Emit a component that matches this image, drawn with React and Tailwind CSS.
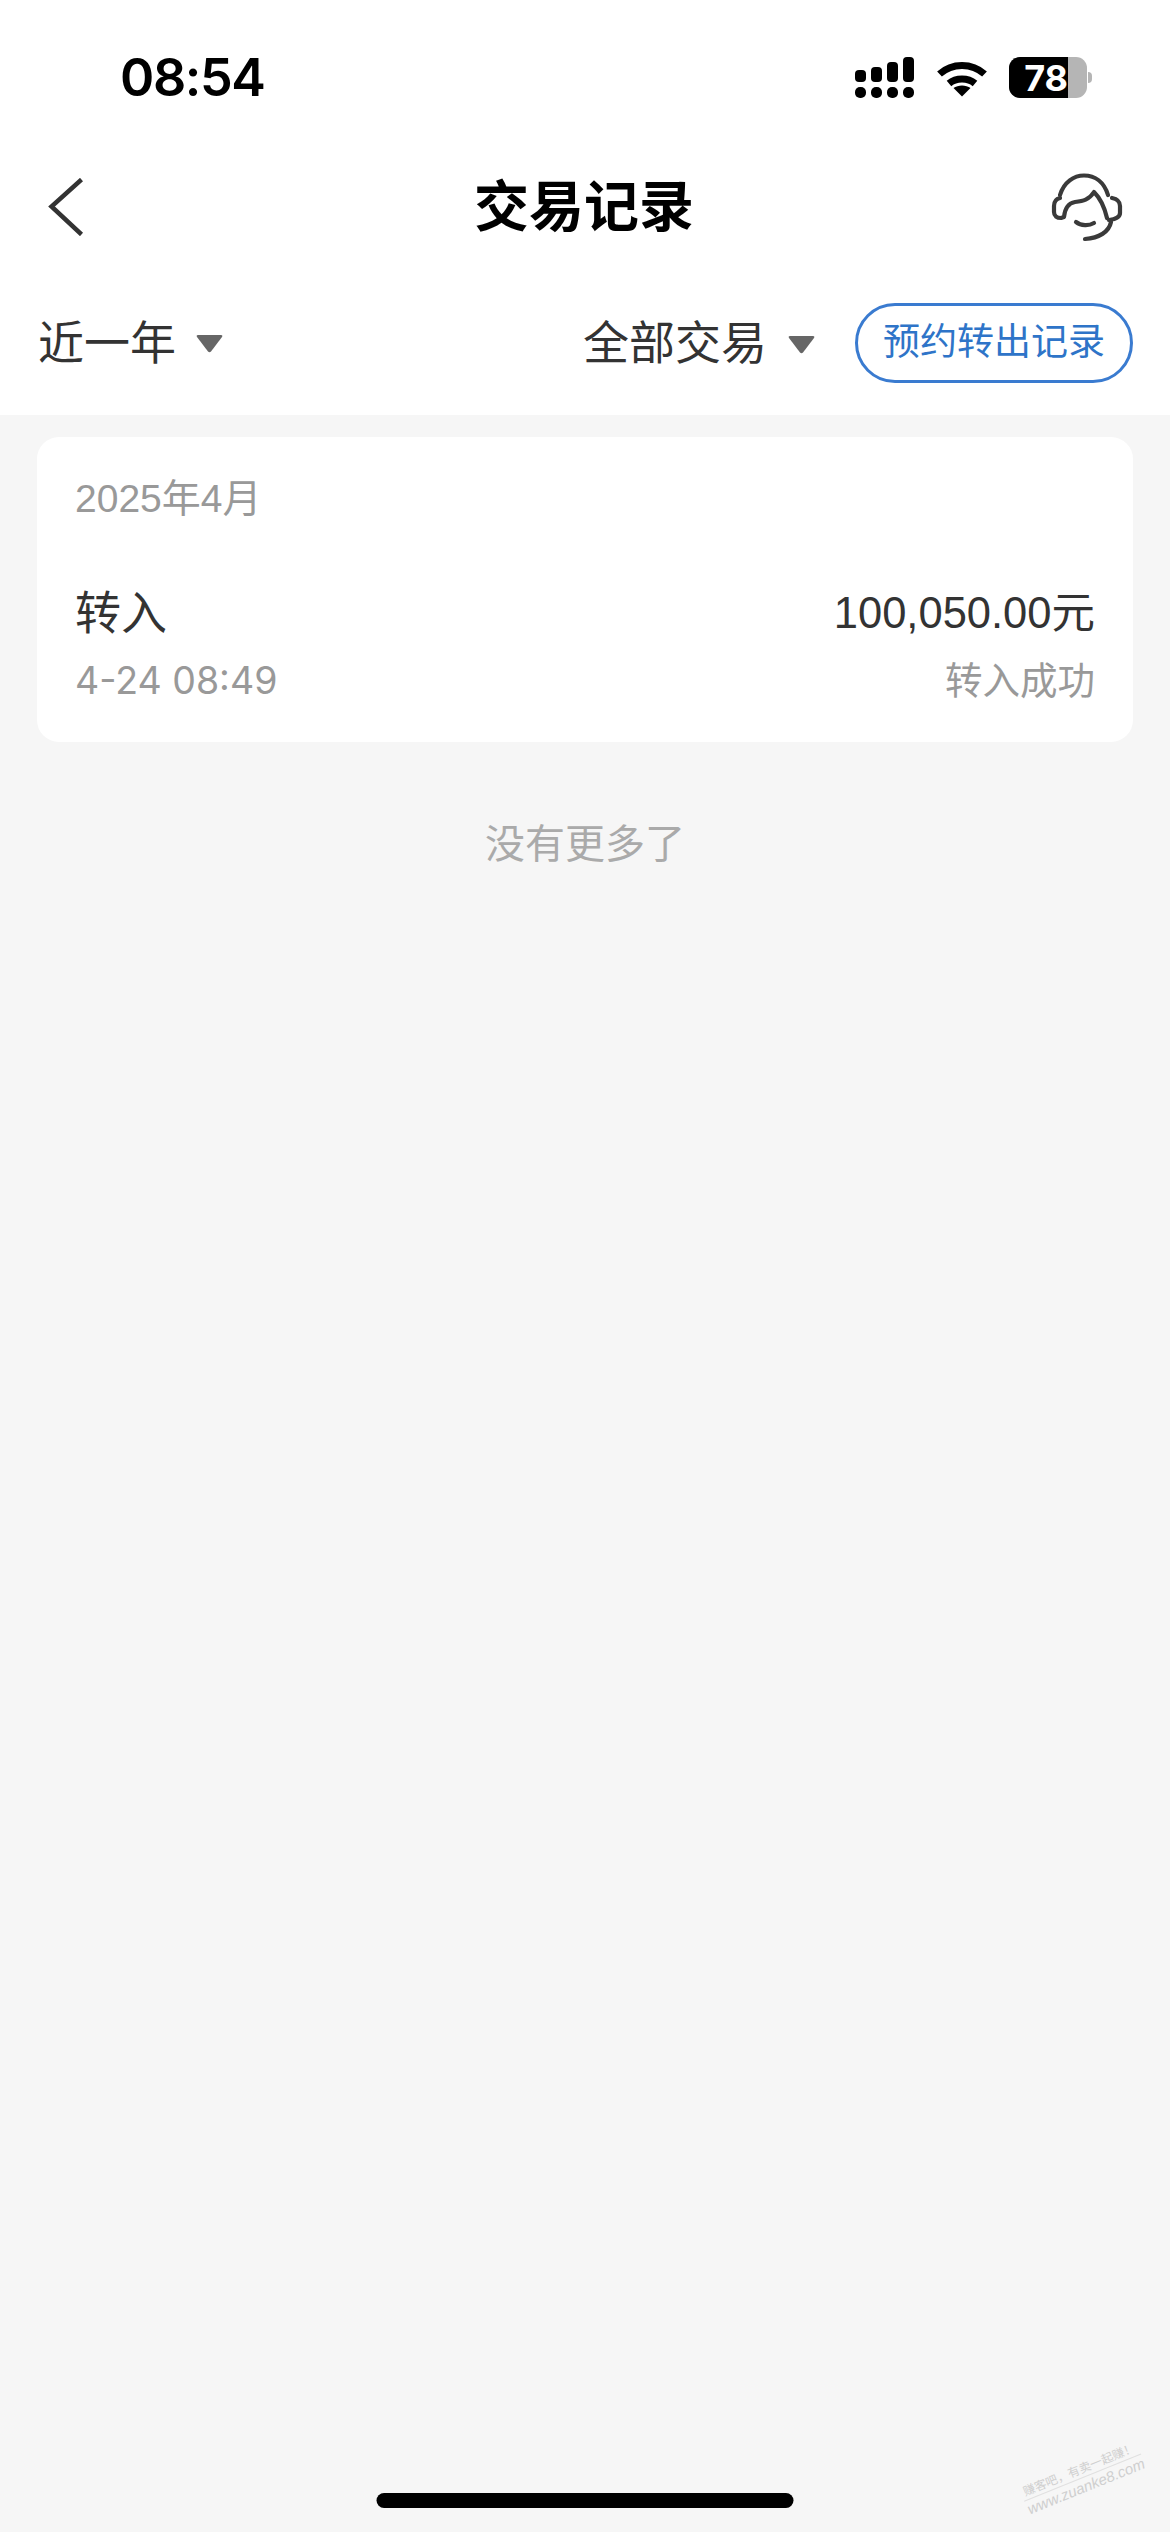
import React from 'react'

const CJK = 'font-["Liberation_Sans","Noto_Sans_CJK_SC",sans-serif]'

// ── Status bar ────────────────────────────────────────────────
function Signal() {
  return (
    <svg width="60" height="43" viewBox="0 0 60 43" fill="#000">
      <rect x="1" y="13" width="11" height="12" rx="4" />
      <rect x="17" y="10" width="11" height="15" rx="4" />
      <rect x="33" y="5" width="11" height="20" rx="4" />
      <rect x="49" y="0" width="11" height="25" rx="4" />
      <rect x="1" y="30" width="11" height="11" rx="5" />
      <rect x="17" y="30" width="11" height="11" rx="5" />
      <rect x="33" y="30" width="11" height="11" rx="5" />
      <rect x="49" y="30" width="11" height="11" rx="5" />
    </svg>
  )
}

function Wifi() {
  return (
    <svg width="52" height="37" viewBox="0 0 52 37" fill="none" stroke="#000" strokeWidth="7">
      <path d="M3.5 14 C16 2.5 36 2.5 48.5 14" />
      <path d="M13 23.5 C20 17.5 32 17.5 39 23.5" />
      <path d="M26 36.5 L17.5 28 C22 24.5 30 24.5 34.5 28 Z" fill="#000" stroke="none" />
    </svg>
  )
}

function Battery() {
  return (
    <div className="flex items-center">
      <div className="flex h-[41px] w-[78px] overflow-hidden rounded-[11px] bg-[#b5b5b5]">
        <div className="flex w-[59px] items-center justify-end bg-black font-['Inter',sans-serif] text-[36px] font-bold leading-none text-white">
          78
        </div>
      </div>
      <div className="ml-[1px] h-[11px] w-[4px] rounded-r-full bg-[#b5b5b5]" />
    </div>
  )
}

// ── Nav icons ─────────────────────────────────────────────────
function Back() {
  return (
    <svg width="36" height="58" viewBox="0 0 36 58" fill="none" stroke="#333" strokeWidth="4.5">
      <path d="M33.5 1.5 L3.5 28.5 L33.5 56.5" />
    </svg>
  )
}

function Headset() {
  return (
    <svg width="90" height="80" viewBox="0 0 90 80" fill="none" stroke="#3a3a3a" strokeWidth="4.2" strokeLinecap="round" strokeLinejoin="round">
      <path d="M21 28 C25 15 35 8.5 45 8.5 C56 8.5 65 15 69 28" />
      <path d="M21 31 C17 32 15 35 15 39 L15 45 C15 49 18 51 22 51 L25 50 C26 40 30 36 36 35 C44 34 50 33 55 25 C60 30 65 38 68 51" />
      <path d="M73 31 C78 32 81 35 81 39 L81 46 C81 50 78 52 70 53" />
      <path d="M72 55 C70 65 60 71 46 72" />
      <path d="M37 55 C42 59 50 59 55 56" />
    </svg>
  )
}

function Caret() {
  return (
    <svg width="27" height="18" viewBox="0 0 27 18" fill="#666">
      <path d="M2 0 H25 Q27 0 26 2 L15 16.5 Q13.5 18 12 16.5 L1 2 Q0 0 2 0 Z" />
    </svg>
  )
}

export default function App() {
  return (
    <div className={`relative flex h-[2532px] flex-col bg-[#f6f6f6] ${CJK}`}>
      {/* Header */}
      <div className="bg-white">
        <div className="flex h-[150px] items-start justify-between pl-[120px] pr-[78px] pt-[57px]">
          <span className="font-['Inter',sans-serif] text-[52px] font-semibold leading-[41px] tracking-[-1.4px] text-black">08:54</span>
          <div className="flex items-start">
            <Signal />
            <div className="ml-[22px] mr-[21px] mt-[3px]"><Wifi /></div>
            <Battery />
          </div>
        </div>

        <div className="grid h-[114px] grid-cols-[1fr_auto_1fr] items-center pl-[40px] pr-[41px]">
          <div className="ml-[8px]"><Back /></div>
          <h1 className="ml-[-1px] text-[55px] font-bold leading-none text-black">交易记录</h1>
          <div className="justify-self-end"><Headset /></div>
        </div>

        <div className="flex h-[151px] items-center justify-between pl-[38px] pr-[37px] pt-[6px]">
          <div className="flex items-center text-[46px] leading-none text-[#333]">
            <span>近一年</span>
            <span className="ml-[20px] mt-[2px]"><Caret /></span>
          </div>
          <div className="flex items-center">
            <span className="text-[46px] leading-none text-[#333]">全部交易</span>
            <span className="ml-[21px] mt-[4px]"><Caret /></span>
            <div className="ml-[40px] flex h-[80px] w-[278px] items-center justify-center rounded-full border-[3px] border-[#3a7bd0] text-[37px] leading-none text-[#2e74c8]">
              预约转出记录
            </div>
          </div>
        </div>
      </div>

      {/* Record card */}
      <div className="mx-[37px] mt-[22px] rounded-[22px] bg-white px-[38px] pb-[39px] pt-[40px]">
        <div className="text-[39px] leading-[44px] text-[#999]">2025年4月</div>
        <div className="mt-[64px] flex items-center justify-between leading-[56px] text-[#333]">
          <span className="text-[46px]">转入</span>
          <span className="text-[43.5px]">100,050.00元</span>
        </div>
        <div className="mt-[18px] flex items-center justify-between text-[38px] leading-[44px] text-[#999]">
          <span className="font-['Inter',sans-serif] text-[37.5px]">4-24 08:49</span>
          <span className="text-[37.5px]">转入成功</span>
        </div>
      </div>

      <div className="mt-[74px] text-center text-[40px] leading-[56px] text-[#aaa]">没有更多了</div>

      {/* Home indicator */}
      <div className="mx-auto mb-[24px] mt-auto h-[15px] w-[417px] -translate-x-[0.5px] rounded-full bg-black" />

      {/* Watermark */}
      <div className="absolute bottom-[38px] right-[24px] w-[126px] origin-center -rotate-[22deg] text-center leading-none text-[#cfcfcf]">
        <div className="whitespace-nowrap border-b border-[#e0e0e0] pb-[2px] text-[12px]">赚客吧，有卖一起赚！</div>
        <div className="whitespace-nowrap pt-[1px] text-[15px] italic">www.zuanke8.com</div>
      </div>
    </div>
  )
}
